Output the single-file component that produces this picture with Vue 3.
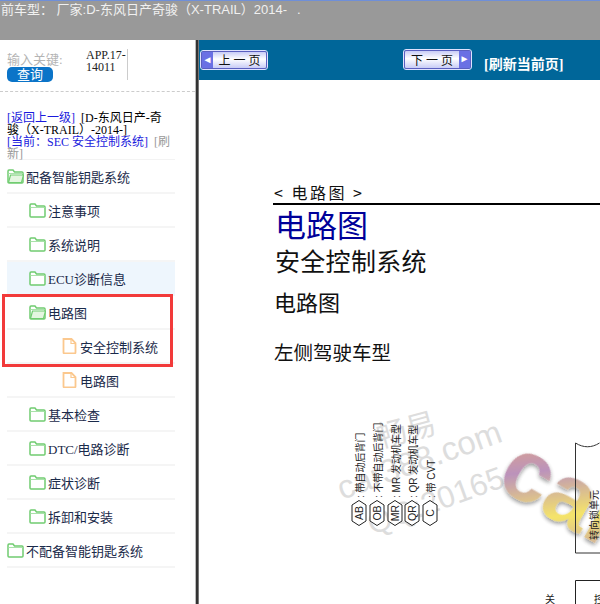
<script setup>
const tree = [
  { label: '配备智能钥匙系统', kind: 'open', level: 0 },
  { label: '注意事项', kind: 'folder', level: 1 },
  { label: '系统说明', kind: 'folder', level: 1 },
  { label: 'ECU诊断信息', kind: 'folder', level: 1, active: true },
  { label: '电路图', kind: 'open', level: 1 },
  { label: '安全控制系统', kind: 'file', level: 2 },
  { label: '电路图', kind: 'file', level: 2 },
  { label: '基本检查', kind: 'folder', level: 1 },
  { label: 'DTC/电路诊断', kind: 'folder', level: 1 },
  { label: '症状诊断', kind: 'folder', level: 1 },
  { label: '拆卸和安装', kind: 'folder', level: 1 },
  { label: '不配备智能钥匙系统', kind: 'folder', level: 0 }
]
const legend = [
  { code: 'AB', text: ': 带自动后背门', x: 359 },
  { code: 'OB', text: ': 不带自动后背门', x: 377 },
  { code: 'MR', text: ': MR 发动机车型', x: 395 },
  { code: 'QR', text: ': QR 发动机车型', x: 412 },
  { code: 'C', text: ': 带 CVT', x: 430 }
]
</script>

<template>
  <div class="page">
    <header class="topbar">前车型： 厂家:D-东风日产奇骏（X-TRAIL）2014-<span class="dot">.</span></header>
    <div class="main">
      <aside class="side">
        <div class="search">
          <div class="search-left">
            <div class="kw">输入关键:</div>
            <div class="btn-query">查询</div>
          </div>
          <div class="search-val">APP.17-14011</div>
        </div>
        <div class="crumbs">
          <div><span class="lk">[返回上一级]</span>&nbsp; <span class="bk">[D-东风日产-奇骏（X-TRAIL）-2014-]</span></div>
          <div><span class="lk">[当前：SEC 安全控制系统]</span>&nbsp; <span class="gr">[刷新]</span></div>
        </div>
        <ul class="tree">
          <li v-for="(n, i) in tree" :key="i" class="row" :class="['lv' + n.level, { active: n.active }]">
            <svg v-if="n.kind === 'file'" class="ic-file" width="15" height="16" viewBox="0 0 15 16">
              <path d="M1.5 1h8l4 4v9.5a.8.8 0 0 1-.8.8H2.300a.8.8 0 0 1-.8-.8z" fill="#fff" stroke="#fbc88e" stroke-width="1.800"/>
              <path d="M9 1v4.500h4.500" fill="none" stroke="#fbc88e" stroke-width="1.200"/>
            </svg>
            <svg v-else class="ic-folder" width="17" height="15" viewBox="0 0 17 15">
              <path d="M1 13V2.200C1 1.500 1.400 1 2 1h4l1.500 2H15c.6 0 1 .4 1 1v9c0 .6-.4 1-1 1H2c-.6 0-1-.4-1-1z" fill="#fff" stroke="#70cc70" stroke-width="1.500"/>
              <path d="M1.500 4.500h14" stroke="#a9e2a9" stroke-width="1"/>
              <path v-if="n.kind === 'open'" d="M1.500 13.500 3.500 6h13l-2 7.500z" fill="#e4f6e0" stroke="#70cc70" stroke-width="1.200"/>
            </svg>
            <span class="lbl">{{ n.label }}</span>
          </li>
        </ul>
        <div class="redbox"></div>
      </aside>
      <div class="divider"></div>
      <section class="content">
        <div class="toolbar">
          <div class="pbtn prev"><span class="arr">◄</span><span class="ptxt">上 一 页</span></div>
          <div class="pbtn next"><span class="ptxt">下 一 页</span><span class="arr">►</span></div>
          <b class="refresh">[刷新当前页]</b>
        </div>
        <div class="doc">
          <div class="d-crumb">&lt; 电路图 &gt;</div>
          <h1 class="d-title">电路图</h1>
          <div class="d-sub1">安全控制系统</div>
          <div class="d-sub2">电路图</div>
          <div class="d-sub3">左侧驾驶车型</div>
        </div>
        <svg class="diagram" width="401" height="204" viewBox="199 400 401 204">
          <defs>
            <linearGradient id="logoGrad" x1="0" y1="0" x2="1" y2="1">
              <stop offset="0" stop-color="#f0a050"/>
              <stop offset="0.350" stop-color="#b080b0"/>
              <stop offset="0.650" stop-color="#f4e050"/>
              <stop offset="1" stop-color="#b080b0"/>
            </linearGradient>
            <filter id="soft" x="-20%" y="-20%" width="150%" height="150%">
              <feGaussianBlur in="SourceAlpha" stdDeviation="2"/>
              <feOffset dx="1" dy="2"/>
              <feComponentTransfer><feFuncA type="linear" slope="0.500"/></feComponentTransfer>
              <feMerge><feMergeNode/><feMergeNode in="SourceGraphic"/></feMerge>
            </filter>
          </defs>
          <g class="wm">
            <text x="380" y="448" font-size="30" transform="rotate(-15 380 448)">畅易</text>
            <text x="342" y="500" font-size="33" transform="rotate(-20 342 500)">car388.com</text>
            <text x="372" y="535" font-size="31" transform="rotate(-20 372 535)">QQ:20165</text>
          </g>
          <g v-for="l in legend" :key="l.code">
            <polygon :points="`${l.x},500.500 ${l.x + 7},505 ${l.x + 7},521 ${l.x},525.500 ${l.x - 7},521 ${l.x - 7},505`" fill="#fff" stroke="#222" stroke-width="1"/>
            <text class="hex" :transform="`translate(${l.x + 4} 513) rotate(-90)`" text-anchor="middle">{{ l.code }}</text>
            <text class="cap" :transform="`translate(${l.x + 5} 498) rotate(-90)`">{{ l.text }}</text>
          </g>
          <text class="logo" x="494" y="485" font-size="88" transform="rotate(30 494 485)" fill="url(#logoGrad)" filter="url(#soft)">car</text>
          <path d="M575.500 553V443c8 5 16 5 24 0M575.500 553H600" fill="none" stroke="#333" stroke-width="1"/>
          <text class="cap" transform="translate(598 540) rotate(-90)">转向锁单元</text>
          <path d="M575.500 604V580.500H600" fill="none" stroke="#222" stroke-width="1"/>
          <text class="cap" x="545" y="603">关</text>
          <text class="cap" x="594" y="603">控</text>
        </svg>
      </section>
    </div>
  </div>
</template>

<style>
html, body { margin: 0; padding: 0; background: #fff; }
</style>

<style scoped>
.page {
  width: 600px;
  height: 604px;
  overflow: hidden;
  display: flex;
  flex-direction: column;
  font-family: "Liberation Serif", "Noto Sans CJK SC", serif;
}
.topbar {
  height: 39px;
  flex: none;
  border-top: 1px solid #6f8fd8;
  background: #999;
  color: #f0f0f0;
  font: 13px/17px "Liberation Sans", "Noto Sans CJK SC", sans-serif;
  padding: 0 0 0 1px;
  white-space: nowrap;
}
.dot { margin-left: 10px; }
.main { flex: 1; display: flex; min-height: 0; }
.side { width: 195px; flex: none; position: relative; background: #fff; }
.search {
  height: 52px;
  box-sizing: border-box;
  border-bottom: 1px dashed #ccc;
  display: flex;
  padding: 10px 0 0 7px;
}
.search-left { width: 79px; padding-top: 2px; }
.kw { color: #b4b4b4; font-size: 13px; line-height: 15px; }
.btn-query {
  width: 46px;
  height: 15px;
  border-radius: 5px;
  background: #0b74c8;
  color: #fff;
  font-size: 13px;
  line-height: 15px;
  text-align: center;
}
.search-val {
  width: 41px;
  height: 31px;
  border-right: 1px solid #ccc;
  font-size: 12px;
  line-height: 12px;
  color: #222;
  margin-top: -1px;
}
.crumbs {
  height: 67px;
  box-sizing: border-box;
  padding: 20px 22px 0 7px;
  font-size: 12px;
  line-height: 12px;
  color: #000;
}
.lk { color: #1a1add; }
.bk { color: #000; }
.gr { color: #999; }
.tree {
  list-style: none;
  margin: 0 0 0 7px;
  padding: 0;
  width: 168px;
  border-top: 1px solid #f3f3f3;
}
.row {
  height: 34px;
  box-sizing: border-box;
  border-bottom: 2px solid #f5f5f5;
  display: flex;
  align-items: center;
  font-size: 13px;
  color: #1a2a4a;
  white-space: nowrap;
}
.row.active { background: #eef6fd; border-bottom-color: #eef6fd; }
.lv0 { padding-left: 0; }
.lv1 { padding-left: 22px; }
.lv2 { padding-left: 55px; }
.ic-folder { margin-right: 2px; flex: none; }
.ic-file { margin-right: 3px; flex: none; }
.redbox {
  position: absolute;
  left: 2px;
  top: 254px;
  width: 165px;
  height: 67px;
  border: 3px solid #f23a3a;
  pointer-events: none;
}
.divider {
  width: 4px;
  flex: none;
  background: linear-gradient(90deg, #bbb 0, #bbb 25%, #333 25%, #333 75%, #777 75%);
}
.content { flex: 1; position: relative; min-width: 0; overflow: hidden; }
.toolbar {
  height: 40px;
  background: #006699;
  display: flex;
  align-items: flex-start;
  padding-left: 2px;
  box-sizing: border-box;
}
.pbtn {
  height: 18px;
  box-sizing: border-box;
  display: flex;
  align-items: center;
  border: 1px solid #5a5fc0;
  outline: 1px solid #dfe2ff;
  border-radius: 2px;
  background: linear-gradient(#c8ccf6, #fff 45%, #c8ccf6);
  font-size: 12px;
  color: #111;
}
.prev { width: 66px; margin-top: 11px; }
.next { width: 67px; margin-top: 10px; margin-left: 137px; height: 19px; }
.ptxt { flex: 1; text-align: center; }
.arr {
  width: 11px;
  align-self: stretch;
  background: #6a70e4;
  color: #fff;
  font-size: 10px;
  line-height: 16px;
  text-align: center;
}
.refresh {
  margin: 17px 0 0 13px;
  color: #fff;
  font-size: 14px;
  line-height: 16px;
  white-space: nowrap;
}
.doc { padding: 103px 0 0 74px; color: #111; font-family: "Noto Sans CJK SC", "Liberation Sans", sans-serif; }
.d-crumb { font-size: 16px; line-height: 20px; letter-spacing: 2.500px; padding-left: 1px; border-bottom: 2px solid #000; margin-top: -1px; padding-bottom: 1px; }
.d-title { margin: 0 0 0 2px; font-size: 31px; line-height: 38px; font-weight: 400; color: #000099; }
.d-sub1 { margin: 1px 0 0 2px; font-size: 25px; line-height: 32px; letter-spacing: .3px; }
.d-sub2 { margin: 11px 0 0 1px; font-size: 22px; line-height: 28px; }
.d-sub3 { margin: 25px 0 0 1px; font-size: 19.500px; line-height: 24px; }
.diagram { position: absolute; left: 0; top: 360px; }
.wm text { fill: #ddd; font-family: "Liberation Sans", "Noto Sans CJK SC", sans-serif; }
.hex { font: 10.500px "Liberation Sans", sans-serif; fill: #222; }
.cap { font: 10px "Liberation Sans", "Noto Sans CJK SC", sans-serif; fill: #222; }
.logo { font-family: "Liberation Sans", sans-serif; font-weight: 700; opacity: 0.850; }
</style>
